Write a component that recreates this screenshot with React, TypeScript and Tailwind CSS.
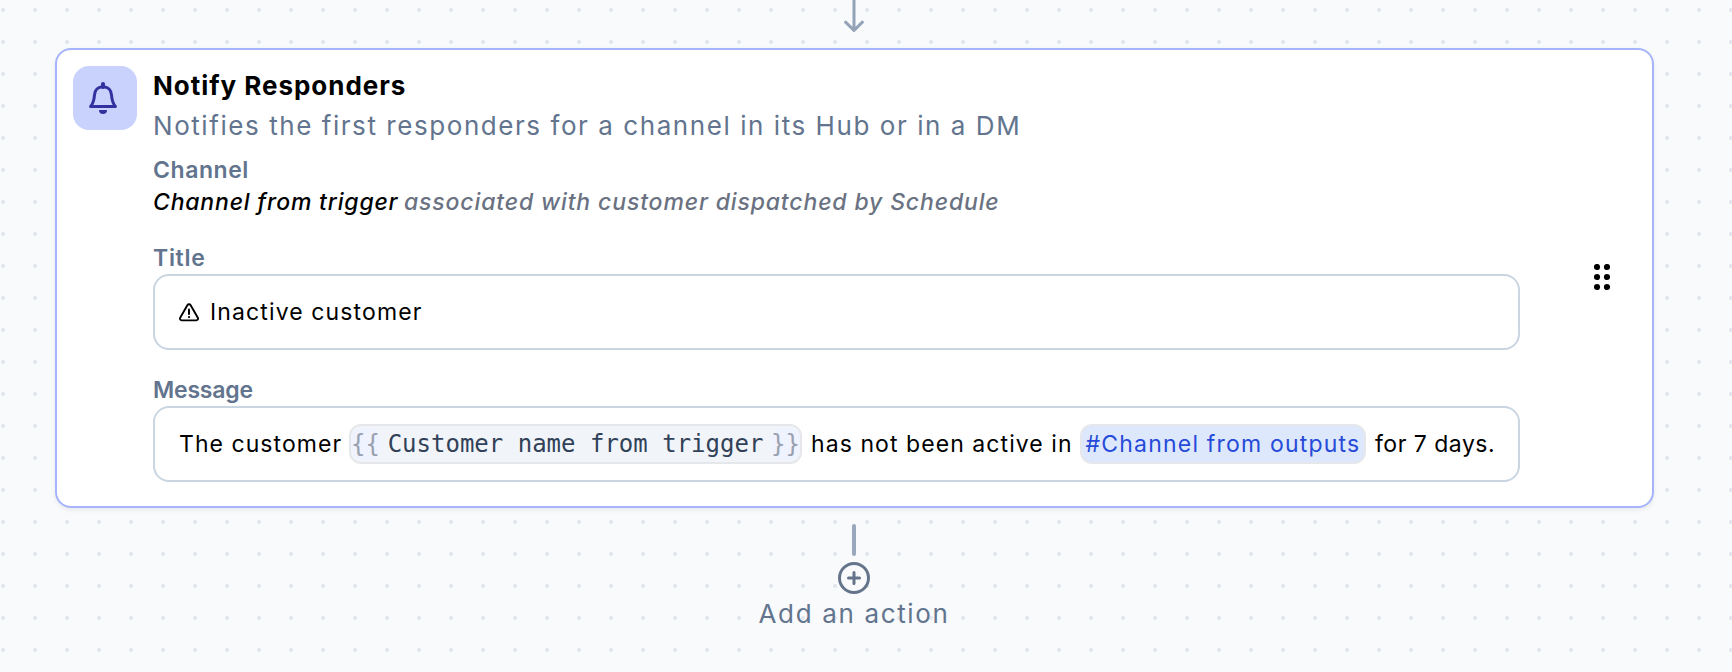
import type { ReactNode } from "react";

function BellIcon() {
  return (
    <svg width="32" height="36" viewBox="0 0 32 36" fill="none">
      <path d="M16 4v3" stroke="#3330a0" strokeWidth="4" strokeLinecap="round" />
      <path
        d="M3.6 26.5C6 23.5 7.1 21 7.4 15.5C7.6 10 11 6.7 16 6.7S24.4 10 24.6 15.5C24.9 21 26 23.5 28.4 26.5Z"
        stroke="#3330a0"
        strokeWidth="3"
        strokeLinejoin="round"
      />
      <path d="M12 30h8a4 4 0 0 1-8 0Z" fill="#3330a0" />
    </svg>
  );
}

function WarningIcon() {
  return (
    <svg width="20" height="19" viewBox="0 0 20 19" fill="none" stroke="#000" strokeLinecap="round" strokeLinejoin="round">
      <path
        d="M8.5 2.1a1.75 1.75 0 0 1 3 0l7.2 12.4a1.8 1.8 0 0 1-1.5 2.9H2.8a1.8 1.8 0 0 1-1.5-2.9Z"
        strokeWidth="1.9"
      />
      <path d="M10 6.6v4.4" strokeWidth="2" />
      <path d="M10 14v.1" strokeWidth="2.2" />
    </svg>
  );
}

function GripIcon() {
  return (
    <svg width="16" height="28" viewBox="0 0 16 28" fill="#000">
      {[3, 13, 23].map((cy) => (
        <g key={cy}>
          <circle cx="3" cy={cy} r="3.1" />
          <circle cx="13" cy={cy} r="3.1" />
        </g>
      ))}
    </svg>
  );
}

function Field({ label, labelClass, children }: { label: string; labelClass: string; children: ReactNode }) {
  return (
    <div className="mt-6">
      <div className={`text-[23px] leading-8 font-semibold text-slate-500 ${labelClass}`}>{label}</div>
      <div className="flex h-[76px] items-center rounded-2xl border-2 border-slate-300 pl-6 text-[23px] whitespace-nowrap text-black">
        {children}
      </div>
    </div>
  );
}

export default function App() {
  return (
    <div className="h-[672px] w-[1732px] overflow-hidden bg-[#f9fafc] bg-[radial-gradient(circle_at_3px_10px,#e2e6ee_1.7px,transparent_2.3px)] bg-[length:32px_32px] font-['Inter','Liberation_Sans',sans-serif]">
      <div className="flex h-12 w-[1708px] justify-center">
        <svg width="24" height="34" viewBox="0 0 24 34" fill="none" stroke="#94a3b8" strokeWidth="3" strokeLinecap="round" strokeLinejoin="round">
          <path d="M12 -4V30M3.6 22.2L12 30.3L20.4 22.2" />
        </svg>
      </div>

      <div className="ml-[55px] flex h-[460px] w-[1599px] rounded-2xl border-2 border-[#a5b4fc] bg-white p-4 shadow-[0_2px_5px_rgba(0,0,0,0.07)]">
        <div className="flex size-16 shrink-0 items-center justify-center rounded-2xl bg-[#c8d2fd] pr-1">
          <BellIcon />
        </div>

        <div className="ml-4 w-[1367px]">
          <div className="text-[26px] leading-10 font-bold tracking-[0.97px] text-black">Notify Responders</div>
          <div className="text-[26px] leading-10 tracking-[1.56px] text-slate-500">
            Notifies the first responders for a channel in its Hub or in a DM
          </div>
          <div className="mt-2 text-[23px] leading-8 font-semibold tracking-[0.55px] text-slate-500">Channel</div>
          <div className="flex text-[23px] leading-8 font-medium whitespace-nowrap italic">
            <span className="w-[251px] tracking-[0.8px] text-black">Channel from trigger</span>
            <span className="tracking-[0.86px] text-gray-500">associated with customer dispatched by Schedule</span>
          </div>

          <Field label="Title" labelClass="tracking-[0.7px]">
            <WarningIcon />
            <span className="ml-[11px] tracking-[1.12px]">Inactive customer</span>
          </Field>

          <Field label="Message" labelClass="tracking-[-0.2px]">
            <span className="w-[170px] tracking-[1.05px]">The customer</span>
            <span className="flex h-10 w-[453px] items-center justify-between rounded-xl border-2 border-gray-200 bg-slate-100 font-['DejaVu_Sans_Mono',monospace] text-[24px] text-slate-700">
              <span className="rounded-xl bg-[#eff2ff] leading-8 text-gray-400">{"{{"}</span>
              <span>Customer name from trigger</span>
              <span className="rounded-xl bg-[#eff2ff] leading-8 text-gray-400">{"}}"}</span>
            </span>
            <span className="ml-[9px] w-[269px] tracking-[1.07px]">has not been active in</span>
            <span className="flex h-10 w-[286px] items-center justify-center rounded-xl border-2 border-gray-200 bg-[#dde8fc] tracking-[1.2px] text-[#264bd8]">
              #Channel from outputs
            </span>
            <span className="ml-[9px] tracking-[0.5px]">for 7 days.</span>
          </Field>
        </div>

        <div className="flex flex-1 items-center justify-end pr-[26px]">
          <GripIcon />
        </div>
      </div>

      <div className="flex w-[1708px] flex-col items-center pt-4">
        <div className="h-8 w-[3.5px] rounded-full bg-[#9aa8bd]" />
        <svg className="mt-1.5" width="32" height="32" viewBox="0 0 32 32" fill="none" stroke="#64748b" strokeWidth="3" strokeLinecap="round">
          <circle cx="16" cy="16" r="14.5" />
          <path d="M16 10.5v11M10.5 16h11" />
        </svg>
        <div className="text-[26px] leading-10 tracking-[1.65px] text-slate-500">Add an action</div>
      </div>
    </div>
  );
}
